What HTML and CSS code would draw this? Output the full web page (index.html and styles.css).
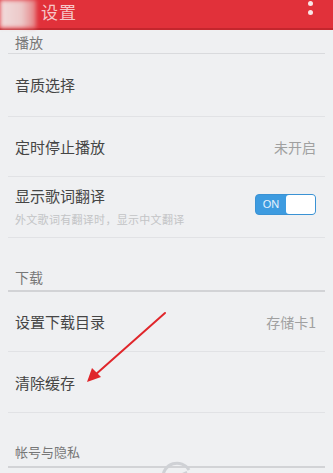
FILE: index.html
```html
<!DOCTYPE html>
<html lang="zh">
<head>
<meta charset="utf-8">
<title>设置</title>
<link rel="stylesheet" href="styles.css">
</head>
<body>
<div class="page">
  <header class="topbar">
    <div class="blur-box"></div>
    <div class="title">设置</div>
    <div class="more"><span></span><span></span></div>
  </header>
  <div class="list">
    <div class="section s-play"><span>播放</span></div>
    <div class="row r1"><span class="label">音质选择</span></div>
    <div class="row r2"><span class="label">定时停止播放</span><span class="value">未开启</span></div>
    <div class="row r3">
      <div class="col">
        <span class="label">显示歌词翻译</span>
        <span class="sub">外文歌词有翻译时，显示中文翻译</span>
      </div>
      <div class="toggle"><span class="on">ON</span><span class="knob"></span></div>
    </div>
    <div class="section s-dl"><span>下载</span></div>
    <div class="row r4"><span class="label">设置下载目录</span><span class="value">存储卡1</span></div>
    <div class="row r5"><span class="label">清除缓存</span></div>
    <div class="section s-acc"><span>帐号与隐私</span></div>
  </div>
  <svg class="arrow" width="333" height="473" viewBox="0 0 333 473">
    <line x1="165" y1="313" x2="95" y2="375" stroke="#e0262b" stroke-width="2" stroke-linecap="round"/>
    <polygon points="87,382 92,368 101,377" fill="#e0262b"/>
  </svg>
  <svg class="mark" width="180" height="20" viewBox="0 0 180 20">
    <path d="M8 20 A14 14 0 0 1 34 12" fill="none" stroke="#cfd1d5" stroke-width="3"/>
    <path d="M18 20 L32 14" stroke="#cfd1d5" stroke-width="2"/>
  </svg>
</div>
</body>
</html>
```
FILE: styles.css
```css
html, body {
  margin: 0;
  padding: 0;
}
body {
  background: #eff0f2;
  font-family: "Noto Sans CJK SC", "Noto Sans", sans-serif;
  width: 333px;
  height: 473px;
  overflow: hidden;
}
.page {
  position: relative;
  width: 333px;
  height: 473px;
  overflow: hidden;
}
.topbar {
  height: 28px;
  background: #e1313a;
  border-bottom: 2px solid #c4262d;
  display: flex;
  align-items: flex-start;
}
.blur-box {
  width: 36px;
  height: 28px;
  background: linear-gradient(90deg, #f1dcdc 0%, #ecc9c9 60%, #e57d80 100%);
  filter: blur(2px);
}
.title {
  margin-left: 5px;
  margin-top: 0;
  font-size: 17px;
  line-height: 24px;
  color: #f6c6c8;
  letter-spacing: 1px;
}
.more {
  margin-left: auto;
  margin-right: 20px;
  margin-top: 1px;
  display: flex;
  flex-direction: column;
  gap: 4px;
}
.more span {
  width: 5px;
  height: 5px;
  border-radius: 50%;
  background: #f8e6e6;
}
.list {
  margin: 0 8px;
}
.section {
  display: flex;
  align-items: flex-end;
  padding-left: 7px;
  border-bottom: 1px solid #d9dadd;
  color: #777;
  font-size: 14px;
}
.section span {
  line-height: 20px;
}
.s-play {
  height: 23px;
}
.s-play span {
  margin-bottom: 1px;
}
.s-dl {
  height: 52px;
  border-bottom: 2px solid #d2d3d6;
}
.s-dl span {
  margin-bottom: 3px;
}
.s-acc {
  height: 53px;
  font-size: 13px;
  border-bottom: 2px solid #d2d3d6;
}
.s-acc span {
  margin-bottom: 4px;
}
.row {
  display: flex;
  align-items: center;
  justify-content: space-between;
  padding: 0 9px 0 7px;
  border-bottom: 1px solid #e1e2e5;
}
.label {
  font-size: 15px;
  color: #454545;
  line-height: 20px;
}
.value {
  font-size: 14px;
  color: #a0a0a0;
}
.r1 { height: 62px; }
.r2 { height: 59px; }
.r3 { height: 60px; }
.r4 { height: 59px; }
.r5 { height: 60px; }
.r5 .label { margin-top: 2px; }
.col {
  display: flex;
  flex-direction: column;
  margin-top: -3px;
}
.sub {
  font-size: 11px;
  letter-spacing: 0.3px;
  color: #c3c4c6;
  margin-top: 6px;
  line-height: 14px;
}
.toggle {
  width: 61px;
  height: 21px;
  border-radius: 4px;
  background: #3d9be0;
  display: flex;
  align-items: center;
  box-sizing: border-box;
  border: 1px solid #3a92d4;
  margin-top: -6px;
}
.toggle .on {
  width: 30px;
  text-align: center;
  color: #e6f2fc;
  font-family: "Liberation Sans", sans-serif;
  font-size: 11px;
}
.toggle .knob {
  flex: 1;
  height: 19px;
  background: #fff;
  border-radius: 3px;
}
.arrow {
  position: absolute;
  left: 0;
  top: 0;
  pointer-events: none;
}
.mark {
  position: absolute;
  left: 155px;
  top: 458px;
}
```
